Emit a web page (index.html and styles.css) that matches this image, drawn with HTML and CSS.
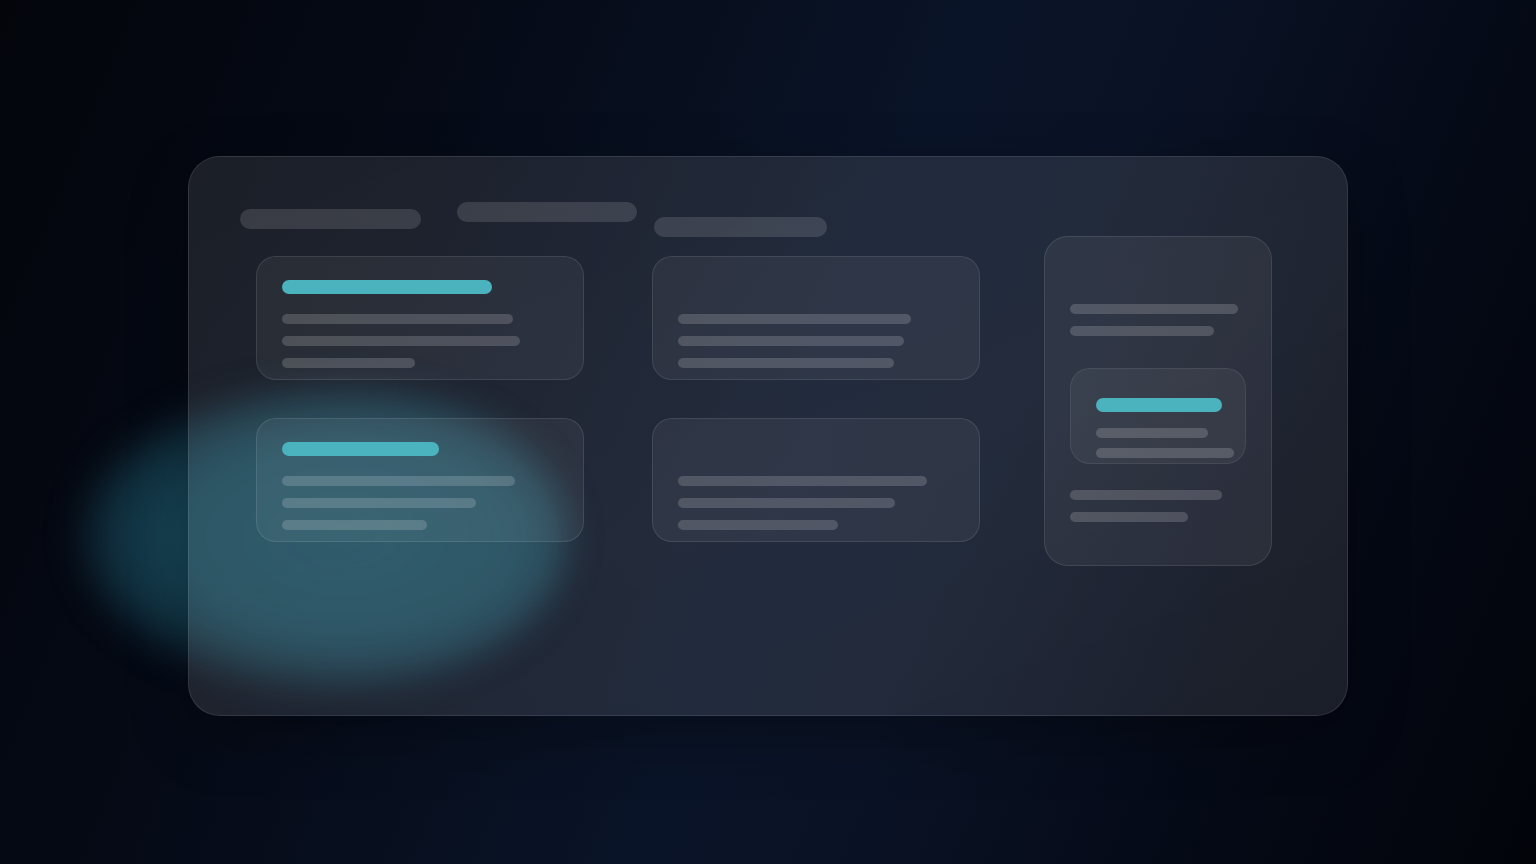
FILE: index.html
```html
<!DOCTYPE html>
<html lang="en">
<head>
<meta charset="utf-8">
<title>Board</title>
<link rel="stylesheet" href="styles.css">
</head>
<body>
<div class="glow"></div>
<main class="panel">
  <div class="left">
    <div class="header">
      <span class="pill p1"></span>
      <span class="pill p2"></span>
      <span class="pill p3"></span>
    </div>
    <div class="grid">
      <div class="card">
        <span class="accent" style="width:210px"></span>
        <span class="line" style="width:231px"></span>
        <span class="line" style="width:238px"></span>
        <span class="line" style="width:133px"></span>
      </div>
      <div class="card">
        <span class="accent blank"></span>
        <span class="line" style="width:233px"></span>
        <span class="line" style="width:226px"></span>
        <span class="line" style="width:216px"></span>
      </div>
      <div class="card">
        <span class="accent" style="width:157px"></span>
        <span class="line" style="width:233px"></span>
        <span class="line" style="width:194px"></span>
        <span class="line" style="width:145px"></span>
      </div>
      <div class="card">
        <span class="accent blank"></span>
        <span class="line" style="width:249px"></span>
        <span class="line" style="width:217px"></span>
        <span class="line" style="width:160px"></span>
      </div>
    </div>
  </div>
  <aside class="side">
    <span class="line" style="width:168px"></span>
    <span class="line" style="width:144px"></span>
    <div class="inner">
      <span class="accent" style="width:126px"></span>
      <span class="line" style="width:112px"></span>
      <span class="line" style="width:138px"></span>
    </div>
    <span class="line" style="width:152px"></span>
    <span class="line" style="width:118px"></span>
  </aside>
</main>
</body>
</html>
```
FILE: styles.css
```css
* { box-sizing: border-box; }
html, body { margin: 0; height: 100%; }
body {
  width: 1536px;
  height: 864px;
  overflow: hidden;
  position: relative;
  font-family: "Inter", "Liberation Sans", sans-serif;
  background: linear-gradient(112deg, #03050b 0%, #050a16 25%, #0a1428 52%, #0a1326 62%, #050a17 80%, #02040a 100%);
  padding-top: 156px;
}
.glow {
  position: absolute;
  left: 72px;
  top: 380px;
  width: 496px;
  height: 314px;
  border-radius: 50%;
  background: radial-gradient(ellipse at 55% 50%, rgba(26, 78, 96, 0.95) 0%, rgba(26, 78, 96, 0.85) 45%, rgba(26, 78, 96, 0.5) 62%, rgba(26, 78, 96, 0) 72%);
  filter: blur(16px);
}
.panel {
  position: relative;
  width: 1160px;
  height: 560px;
  margin: 0 auto;
  border-radius: 32px;
  border: 1px solid rgba(255, 255, 255, 0.1);
  background: linear-gradient(160deg, rgba(255, 255, 255, 0.095) 0%, rgba(255, 255, 255, 0.105) 55%, rgba(255, 255, 255, 0.09) 100%);
  padding: 45px 0 0 51px;
  display: flex;
  gap: 64px;
  box-shadow: 0 20px 60px rgba(0, 0, 0, 0.3);
}
.left { width: 740px; }
.header {
  display: flex;
  align-items: flex-start;
  height: 54px;
}
.pill {
  display: block;
  height: 20px;
  border-radius: 10px;
  background: rgba(255, 255, 255, 0.13);
}
.p1 { width: 181px; margin-top: 7px; }
.p2 { width: 180px; margin-left: 36px; }
.p3 { width: 173px; margin-left: 17px; margin-top: 15px; }
.grid {
  margin-left: 16px;
  display: grid;
  grid-template-columns: 328px 328px;
  column-gap: 68px;
  row-gap: 38px;
}
.card {
  height: 124px;
  border-radius: 20px;
  border: 1px solid rgba(255, 255, 255, 0.1);
  background: rgba(255, 255, 255, 0.055);
  padding: 23px 0 0 25px;
  display: flex;
  flex-direction: column;
}
.accent {
  display: block;
  height: 14px;
  border-radius: 7px;
  background: #4ab3bd;
  margin-bottom: 20px;
  flex: none;
}
.accent.blank { background: transparent; }
.line {
  display: block;
  height: 10px;
  border-radius: 5px;
  background: rgba(255, 255, 255, 0.17);
  margin-bottom: 12px;
  flex: none;
}
.side {
  margin-top: 34px;
  width: 228px;
  height: 330px;
  border-radius: 24px;
  border: 1px solid rgba(255, 255, 255, 0.1);
  background: rgba(255, 255, 255, 0.06);
  padding: 67px 0 0 25px;
  display: flex;
  flex-direction: column;
}
.side > .line:nth-of-type(2) { margin-bottom: 0; }
.inner {
  margin-top: 32px;
  margin-bottom: 26px;
  width: 176px;
  height: 96px;
  border-radius: 20px;
  border: 1px solid rgba(255, 255, 255, 0.08);
  background: rgba(255, 255, 255, 0.05);
  padding: 29px 0 0 25px;
  display: flex;
  flex-direction: column;
}
.inner .accent { margin-bottom: 16px; }
.inner .line { margin-bottom: 10px; }
```
